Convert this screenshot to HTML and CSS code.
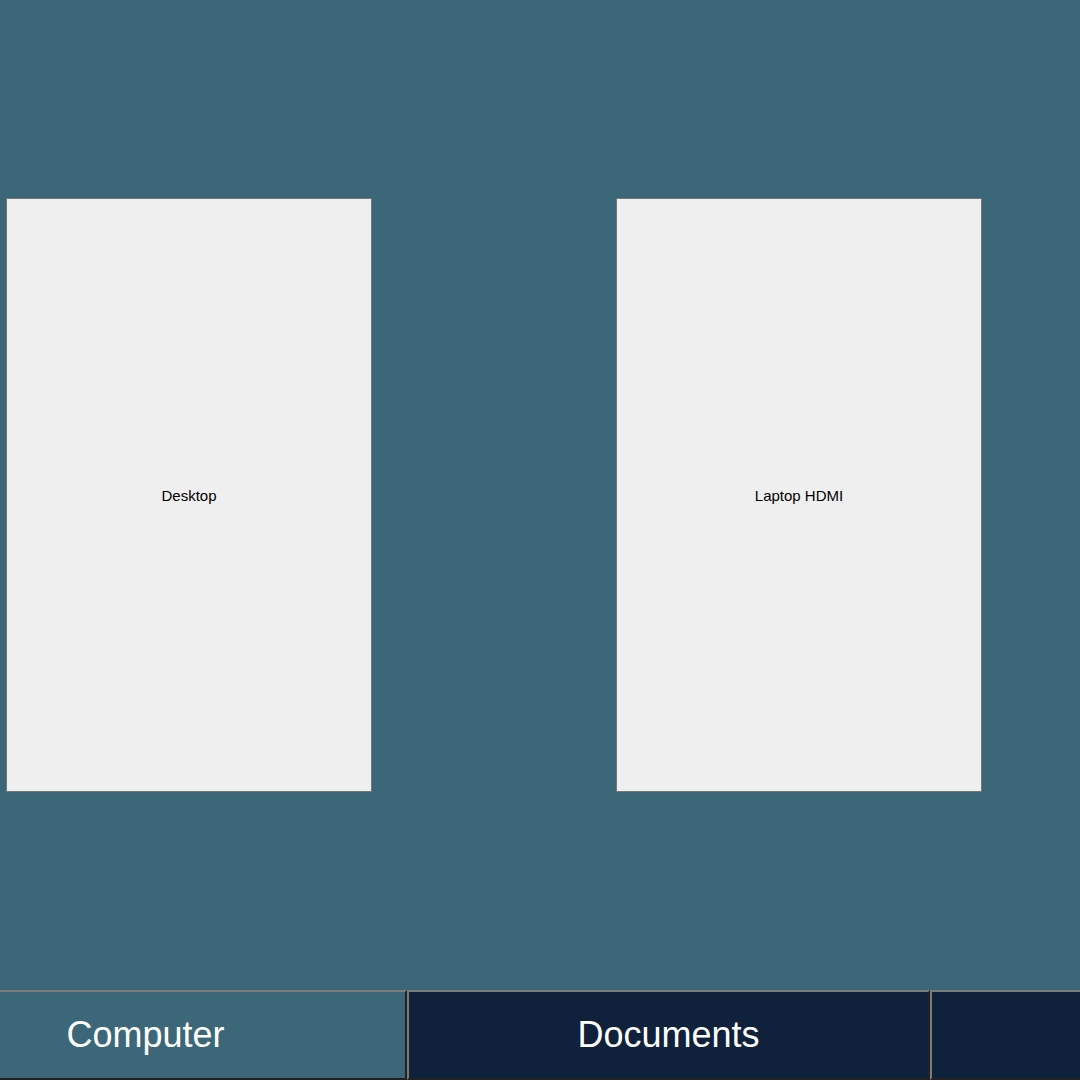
FILE: index.html
```html
<!DOCTYPE html>
<html>
<head>
<meta charset="utf-8">
<link rel="stylesheet" href="styles.css">
</head>
<body>
<div class="app">
  <main class="stage">
    <div class="card"><span>Desktop</span></div>
    <div class="card"><span>Laptop HDMI</span></div>
  </main>
  <nav class="tabbar">
    <div class="tabs">
      <div class="tab tab-active">Computer</div>
      <div class="tab">Documents</div>
      <div class="tab"></div>
    </div>
  </nav>
</div>
</body>
</html>
```
FILE: styles.css
```css
html, body {
  margin: 0;
  padding: 0;
  width: 1080px;
  height: 1080px;
  overflow: hidden;
  background: #3c6779;
  font-family: "Liberation Sans", Arial, sans-serif;
}
.app {
  display: flex;
  flex-direction: column;
  width: 1080px;
  height: 1080px;
}
.stage {
  height: 990px;
  display: flex;
  align-items: center;
  padding-left: 6px;
  gap: 244px;
  box-sizing: border-box;
}
.card {
  width: 366px;
  height: 594px;
  box-sizing: border-box;
  background: #efefef;
  border: 1px solid #767676;
  border-radius: 1px;
  display: flex;
  align-items: center;
  justify-content: center;
  font-size: 15px;
  color: #000;
}
.tabbar {
  height: 90px;
  overflow: hidden;
}
.tabs {
  display: flex;
  margin-left: -116px;
  height: 90px;
}
.tab {
  flex: 0 0 523px;
  box-sizing: border-box;
  height: 90px;
  background: #10213b;
  color: #fff;
  font-size: 36px;
  display: flex;
  align-items: center;
  justify-content: center;
  border-style: solid;
  border-width: 2px;
  border-color: #7b7b7b #222222 #222222 #7b7b7b;
}
.tab-active {
  background: #3c6779;
}
```
